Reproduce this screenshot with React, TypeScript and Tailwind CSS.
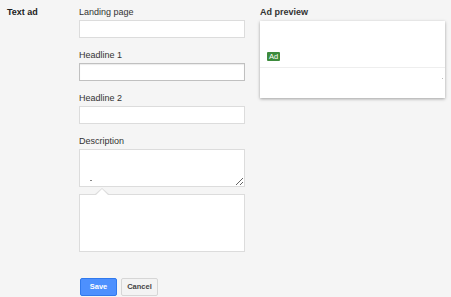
import React from "react";

const fields = [
  { label: "Landing page", focused: false },
  { label: "Headline 1", focused: true },
  { label: "Headline 2", focused: false },
];

const Field = ({ label, focused }: { label: string; focused: boolean }) => (
  <div className="mb-[11px]">
    <div className="h-[12px] leading-[12px] text-[9px] text-[#333] mb-[2px]">{label}</div>
    <input
      className={
        "block w-[166px] h-[18px] bg-white border outline-none " +
        (focused ? "border-[#c0c0c0] shadow-[inset_0_1px_1px_rgba(0,0,0,0.08)]" : "border-[#dcdcdc]")
      }
    />
  </div>
);

export default function App() {
  return (
    <div
      className="w-[451px] h-[297px] bg-[#f5f5f5] flex pt-[6px] overflow-hidden"
      style={{ fontFamily: '"Liberation Sans", Arial, sans-serif' }}
    >
      {/* left label */}
      <div className="w-[79px] pl-[7px] text-[9px] font-bold leading-[12px] text-[#222]">Text ad</div>

      {/* form */}
      <div className="w-[166px] flex flex-col">
        {fields.map((f) => (
          <Field key={f.label} label={f.label} focused={f.focused} />
        ))}

        <div className="h-[12px] leading-[12px] text-[9px] text-[#333] mb-[2px]">Description</div>
        <div className="relative">
          <textarea className="block w-[166px] h-[38px] bg-white border border-[#dcdcdc] outline-none resize-y" />
          <span className="absolute left-[11px] top-[31px] w-[2px] h-[1px] bg-[#888]" />
        </div>

        {/* popover */}
        <div className="relative mt-[7px] w-[166px] h-[58px] bg-white border border-[#dcdcdc]">
          <div className="absolute -top-[7px] left-[14px] w-0 h-0 border-l-[8px] border-r-[8px] border-b-[7px] border-l-transparent border-r-transparent border-b-[#dcdcdc]" />
          <div className="absolute -top-[6px] left-[15px] w-0 h-0 border-l-[7px] border-r-[7px] border-b-[7px] border-l-transparent border-r-transparent border-b-white" />
        </div>

        <div className="flex gap-[4px] mt-[26px] ml-[1px]">
          <button className="w-[37px] h-[18px] rounded-[2px] bg-[#4d90fe] border border-[#3079ed] text-white text-[7.5px] font-bold">
            Save
          </button>
          <button className="w-[37px] h-[18px] rounded-[2px] bg-[#f3f3f3] border border-[#d6d6d6] text-[#444] text-[7.5px] font-bold">
            Cancel
          </button>
        </div>
      </div>

      {/* preview */}
      <div className="ml-[15px] w-[185px]">
        <div className="h-[12px] leading-[12px] text-[9px] font-bold text-[#333] mb-[3px]">Ad preview</div>
        <div className="w-[185px] h-[77px] bg-white shadow-[0_1px_3px_rgba(0,0,0,0.35)] flex flex-col">
          <div className="h-[46px] flex items-end pl-[7px] pb-[6px]">
            <span className="bg-[#3d8b3d] text-white text-[7.5px] leading-[9px] px-[2px] rounded-[1px]">Ad</span>
          </div>
          <div className="border-t border-[#eeeeee] flex-1 relative">
            <span className="absolute right-[2px] top-[10px] w-[1px] h-[1px] bg-[#bbb]" />
          </div>
        </div>
      </div>
    </div>
  );
}
